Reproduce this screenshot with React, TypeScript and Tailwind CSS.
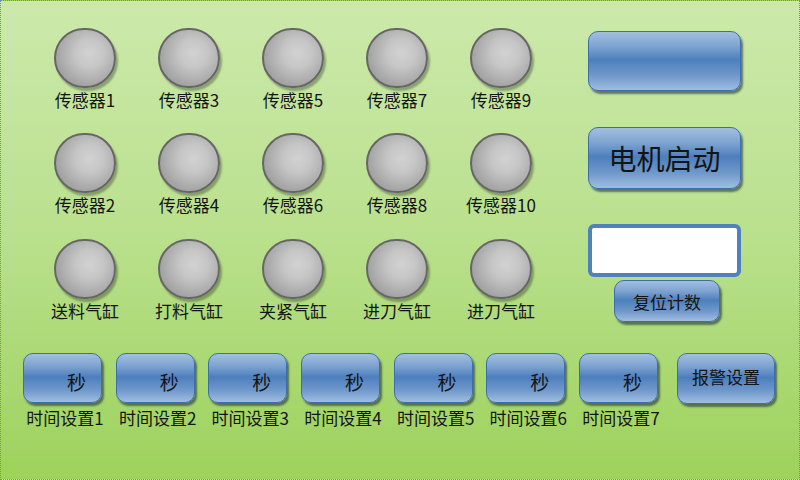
import React from "react";

const font = { fontFamily: '"Noto Sans CJK SC", "Noto Sans", sans-serif' };

const sensors = [
  "传感器1", "传感器3", "传感器5", "传感器7", "传感器9",
  "传感器2", "传感器4", "传感器6", "传感器8", "传感器10",
  "送料气缸", "打料气缸", "夹紧气缸", "进刀气缸", "进刀气缸",
];

const btn =
  "rounded-[10px] border border-[#3d6eab] bg-[linear-gradient(180deg,#a2bfe0_0%,#7ea3d0_25%,#4d7fbd_48%,#6f98cb_75%,#a0bde0_100%)] shadow-[2px_3px_2px_rgba(20,30,50,0.55)]";

export default function App() {
  return (
    <div
      className="w-[800px] h-[480px] border border-dotted border-[#6f82e0] bg-[linear-gradient(180deg,#cce9ab_0%,#b9e08c_50%,#9dd25c_100%)] flex flex-col text-[#141414]"
      style={font}
    >
      <div className="flex">
        <div className="grid grid-cols-[repeat(5,104px)] gap-y-[22px] pl-[32px] pt-[27px]">
          {sensors.map((s, i) => (
            <div key={i} className="flex flex-col items-center h-[82px]">
              <div className="w-[62px] h-[62px] rounded-full border-2 border-[#666666] bg-[radial-gradient(circle_at_58%_42%,#d2d2d2_0%,#c6c6c6_30%,#a4a4a4_70%,#8a8a8a_100%)] shadow-[2px_3px_2px_rgba(0,0,0,0.3)]" />
              <div className="text-[17px] leading-[20px] mt-[2px] whitespace-nowrap">{s}</div>
            </div>
          ))}
        </div>
        <div className="flex flex-col ml-[35px] pt-[30px] w-[154px]">
          <div className={`${btn} h-[60px] w-[153px]`} />
          <div className={`${btn} h-[62px] w-[153px] mt-[36px] flex items-center justify-center text-[28px] leading-none`}>
            电机启动
          </div>
          <div className="mt-[35px] h-[53px] w-[153px] rounded-[6px] border-[4px] border-[#4f81bd] bg-white" />
          <div className={`${btn} mt-[3px] ml-[26px] h-[42px] w-[106px] flex items-center justify-center text-[17px] leading-none`}>
            复位计数
          </div>
        </div>
      </div>
      <div className="flex items-start pl-[22px] mt-[31px]">
        <div className="flex gap-[13.67px]">
          {[1, 2, 3, 4, 5, 6, 7].map((n) => (
            <div key={n} className="flex flex-col items-center w-[79px]">
              <div className={`${btn} h-[50px] w-[79px] flex items-center justify-end pr-[15px] pt-[6px] text-[19px] leading-none`}>
                秒
              </div>
              <div className="text-[17px] leading-[20px] mt-[5px] ml-[5px] whitespace-nowrap">时间设置{n}</div>
            </div>
          ))}
        </div>
        <div className={`${btn} ml-[19px] h-[51px] w-[98px] flex items-center justify-center text-[17px] leading-none pb-[4px]`}>
          报警设置
        </div>
      </div>
    </div>
  );
}
